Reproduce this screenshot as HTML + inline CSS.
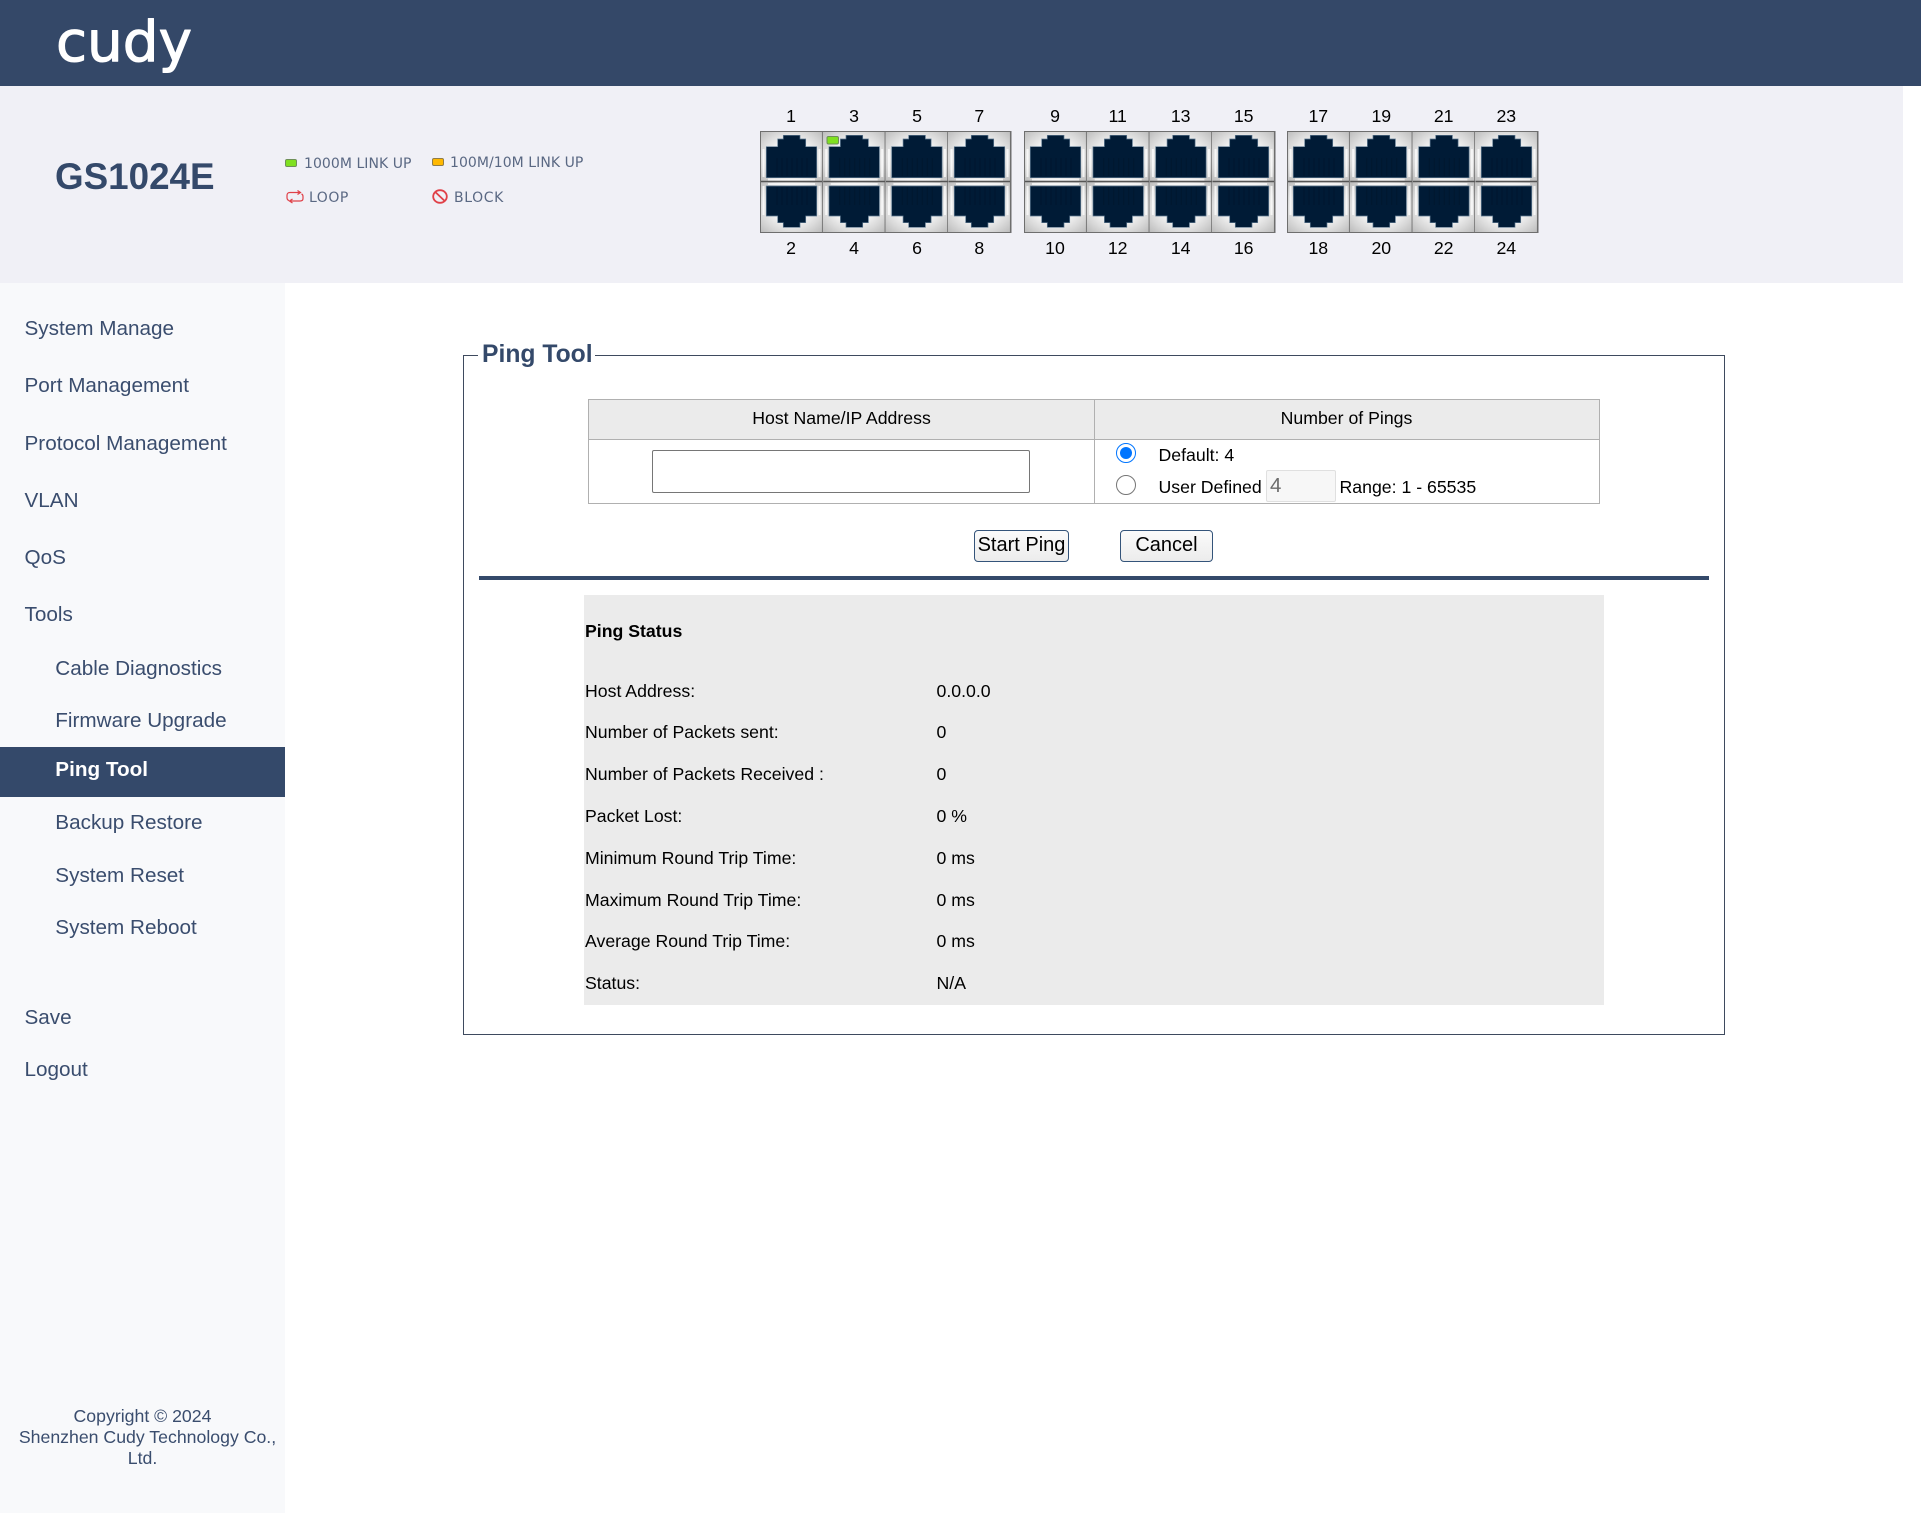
<!DOCTYPE html>
<html lang="en">
<head>
<meta charset="utf-8">
<title>Ping Tool</title>
<style>
html,body{margin:0;padding:0;background:#fff;}
body{position:relative;width:1921px;height:1516px;overflow:hidden;font-family:"Liberation Sans",Arial,sans-serif;color:#000;}
.a{position:absolute;}
.t{position:absolute;white-space:nowrap;line-height:20px;font-size:17.7px;}
.m{position:absolute;white-space:nowrap;line-height:24px;font-size:20.7px;color:#3a4d6e;}
.l{position:absolute;white-space:nowrap;line-height:16px;font-family:"DejaVu Sans",sans-serif;font-size:14px;letter-spacing:.05px;color:#5a6883;}
.n{position:absolute;width:40px;text-align:center;line-height:20px;font-size:17.7px;}
.b{position:absolute;top:530px;height:32px;box-sizing:border-box;border:1.8px solid #34547a;border-radius:4px;background:linear-gradient(#fbfbfb,#ececec);font-size:20px;line-height:28px;text-align:center;color:#000;}
input[type=radio]{position:absolute;margin:0;width:20px;height:20px;}
</style>
</head>
<body>
<!-- header -->
<div class="a" style="left:0;top:0;width:1921px;height:86px;background:#344868;"></div>
<svg class="a" style="left:0;top:0" width="260" height="86"><text x="56" y="61" textLength="136" lengthAdjust="spacingAndGlyphs" font-family="DejaVu Sans" font-size="56" fill="#fff" stroke="#fff" stroke-width="1.1" stroke-linejoin="round">cudy</text></svg>
<!-- sub header -->
<div class="a" style="left:0;top:86px;width:1903px;height:197px;background:#f0f0f6;"></div>
<div class="t" style="left:55px;top:155px;font-size:36.8px;font-weight:bold;line-height:44px;color:#34496a;">GS1024E</div>

<!-- legend -->
<div class="a" style="left:285px;top:159px;width:12px;height:8px;box-sizing:border-box;background:#7fe020;border:1px solid #6e8f58;border-radius:2px;"></div>
<div class="l" style="left:304px;top:156px;">1000M LINK UP</div>
<div class="a" style="left:432px;top:158px;width:12px;height:8px;box-sizing:border-box;background:#ffb800;border:1px solid #8f7c48;border-radius:2px;"></div>
<div class="l" style="left:450px;top:155px;">100M/10M LINK UP</div>
<svg class="a" style="left:286px;top:190px" width="18" height="14" viewBox="0 0 18 14" fill="none" stroke="#e04048" stroke-width="1.2">
<path d="M14 2.500H4Q1 2.500 1 5.500V7.500Q1 10 3 10.500"/><path d="M11.500 .5L14.500 2.500L11.500 4.500"/>
<path d="M4 11H14Q17 11 17 8.500V6.500Q17 4.500 15.500 4"/><path d="M6.500 9L3.500 11L6.500 13"/>
</svg>
<div class="l" style="left:309px;top:190px;letter-spacing:.5px;">LOOP</div>
<svg class="a" style="left:432px;top:189px" width="16" height="15" viewBox="0 0 16 15" fill="none" stroke="#e04048" stroke-width="1.8">
<ellipse cx="8" cy="7.500" rx="6.800" ry="6.300"/><path d="M3.300 3L12.700 12"/>
</svg>
<div class="l" style="left:454px;top:190px;letter-spacing:.6px;">BLOCK</div>

<!-- port numbers -->
<div class="n" style="left:771px;top:106px">1</div><div class="n" style="left:834px;top:106px">3</div><div class="n" style="left:897px;top:106px">5</div><div class="n" style="left:959.300px;top:106px">7</div>
<div class="n" style="left:1035px;top:106px">9</div><div class="n" style="left:1097.700px;top:106px">11</div><div class="n" style="left:1160.700px;top:106px">13</div><div class="n" style="left:1223.700px;top:106px">15</div>
<div class="n" style="left:1298.300px;top:106px">17</div><div class="n" style="left:1361.300px;top:106px">19</div><div class="n" style="left:1423.700px;top:106px">21</div><div class="n" style="left:1486.300px;top:106px">23</div>
<div class="n" style="left:771px;top:237.500px">2</div><div class="n" style="left:834px;top:237.500px">4</div><div class="n" style="left:897px;top:237.500px">6</div><div class="n" style="left:959.300px;top:237.500px">8</div>
<div class="n" style="left:1035px;top:237.500px">10</div><div class="n" style="left:1097.700px;top:237.500px">12</div><div class="n" style="left:1160.700px;top:237.500px">14</div><div class="n" style="left:1223.700px;top:237.500px">16</div>
<div class="n" style="left:1298.300px;top:237.500px">18</div><div class="n" style="left:1361.300px;top:237.500px">20</div><div class="n" style="left:1423.700px;top:237.500px">22</div><div class="n" style="left:1486.300px;top:237.500px">24</div>

<!-- ports -->
<svg class="a" style="left:760px;top:131px" width="790" height="102" viewBox="0 0 790 102">
<defs>
<radialGradient id="g" cx=".5" cy=".5" r=".72">
<stop offset="0" stop-color="#fff"/><stop offset=".45" stop-color="#f0f0f0"/><stop offset=".7" stop-color="#d8d8d8"/><stop offset="1" stop-color="#b8b8b8"/>
</radialGradient>
<g id="p">
<rect x="0" y="0" width="62.700" height="50.500" fill="url(#g)"/>
<rect x="0" y="50.500" width="62.700" height="51" fill="url(#g)"/>
<path d="M3.500 18V46M59.500 18V46M3.500 55V84M59.500 55V84M8 53H55M8 48.500H55" stroke="#fff" stroke-width="2" opacity=".75"/>
<path d="M6.300 46.700V15.700H17.700V8H23.300V4.300H40V8H45.700V15.700H56.700V46.700Z" fill="#001b36" stroke="#5d7890" stroke-width=".7"/>
<path d="M6.300 55H56.700V85H45.700V91.700H40V96.300H23.300V91.700H17.700V85H6.300Z" fill="#001b36" stroke="#5d7890" stroke-width=".7"/>
<path d="M17 27V45M22 27V45M27 27V45M32 27V45M37 27V45M42 27V45M47 27V45M17 56V74M22 56V74M27 56V74M32 56V74M37 56V74M42 56V74M47 56V74" stroke="#001830" stroke-width="1.200"/>
<path d="M.5 50.500H62.700" stroke="#555" stroke-width="1.500"/>
<path d="M62.700 0V102" stroke="#5e5e5e" stroke-width="1.500"/>
</g>
</defs>
<use href="#p" x="0"/><use href="#p" x="62.700"/><use href="#p" x="125.400"/><use href="#p" x="188"/>
<use href="#p" x="264"/><use href="#p" x="326.700"/><use href="#p" x="389.400"/><use href="#p" x="452"/>
<use href="#p" x="527"/><use href="#p" x="589.700"/><use href="#p" x="652.400"/><use href="#p" x="715"/>
<g fill="none" stroke="#6e6e6e" stroke-width="1">
<rect x=".5" y=".5" width="250" height="101"/><rect x="264.500" y=".5" width="250" height="101"/><rect x="527.500" y=".5" width="250" height="101"/>
</g>
<rect x="67" y="5.500" width="11.500" height="7.500" rx="1.500" fill="#7fe020" stroke="#6e8f58" stroke-width="1"/>
</svg>

<!-- sidebar -->
<div class="a" style="left:0;top:283px;width:285px;height:1230px;background:#f8f9fb;"></div>
<div class="m" style="left:24.500px;top:317px">System Manage</div>
<div class="m" style="left:24.500px;top:374px">Port Management</div>
<div class="m" style="left:24.500px;top:431.500px">Protocol Management</div>
<div class="m" style="left:24.500px;top:488.500px">VLAN</div>
<div class="m" style="left:24.500px;top:545.500px">QoS</div>
<div class="m" style="left:24.500px;top:602.500px">Tools</div>
<div class="m" style="left:55.300px;top:657px">Cable Diagnostics</div>
<div class="m" style="left:55.300px;top:709px">Firmware Upgrade</div>
<div class="a" style="left:0;top:747px;width:285px;height:50px;background:#34496a;"></div>
<div class="m" style="left:55.300px;top:758px;color:#fff;font-weight:bold;">Ping Tool</div>
<div class="m" style="left:55.300px;top:811px">Backup Restore</div>
<div class="m" style="left:55.300px;top:864px">System Reset</div>
<div class="m" style="left:55.300px;top:916px">System Reboot</div>
<div class="m" style="left:24.500px;top:1005.500px">Save</div>
<div class="m" style="left:24.500px;top:1058px">Logout</div>
<div class="a" style="left:0;top:1405.500px;width:285px;text-align:center;font-size:17.7px;line-height:21px;color:#3a4d6e;">Copyright © 2024<br><span style="position:relative;left:5px;">Shenzhen Cudy Technology Co.,</span><br>Ltd.</div>

<!-- fieldset -->
<div class="a" style="left:463px;top:355px;width:1262px;height:680px;box-sizing:border-box;border:1.500px solid #3e4a5e;"></div>
<div class="a" style="left:478px;top:350px;width:117px;height:10px;background:#fff;"></div>
<div class="t" style="left:482px;top:340.500px;font-size:24.700px;line-height:28px;font-weight:bold;color:#34496a;">Ping Tool</div>

<!-- table -->
<div class="a" style="left:588px;top:399px;width:1012px;height:105px;box-sizing:border-box;border:1.250px solid #b0b0b0;"></div>
<div class="a" style="left:589px;top:400px;width:1010px;height:39px;background:#ebebeb;border-bottom:1.250px solid #b0b0b0;"></div>
<div class="a" style="left:1094px;top:399px;width:1.250px;height:105px;background:#b0b0b0;"></div>
<div class="t" style="left:589px;top:408px;width:505px;text-align:center;">Host Name/IP Address</div>
<div class="t" style="left:1094px;top:408px;width:505px;text-align:center;">Number of Pings</div>
<div class="a" style="left:652px;top:450px;width:378px;height:43px;box-sizing:border-box;border:1.250px solid #767676;border-radius:2px;background:#fff;"></div>
<input type="radio" name="r" checked style="left:1116px;top:443px">
<input type="radio" name="r" style="left:1116px;top:475px">
<div class="t" style="left:1158.500px;top:444.500px">Default: 4</div>
<div class="t" style="left:1158.500px;top:476.500px">User Defined</div>
<div class="a" style="left:1266px;top:470px;width:70px;height:32px;box-sizing:border-box;border:1.250px solid #e0e0e0;border-radius:2px;background:#f7f7f7;color:#6d6d6d;font-size:20.500px;line-height:29px;padding-left:3px;">4</div>
<div class="t" style="left:1339.500px;top:476.500px">Range: 1 - 65535</div>

<!-- buttons -->
<div class="b" style="left:974px;width:95px;">Start Ping</div>
<div class="b" style="left:1120px;width:93px;">Cancel</div>

<div class="a" style="left:479px;top:576px;width:1230px;height:4px;background:#34496a;"></div>

<!-- status -->
<div class="a" style="left:584px;top:595px;width:1020px;height:410px;background:#ebebeb;"></div>
<div class="t" style="left:585px;top:621px;font-weight:bold;">Ping Status</div>
<div class="t" style="left:585px;top:681px">Host Address:</div><div class="t" style="left:936.500px;top:681px">0.0.0.0</div>
<div class="t" style="left:585px;top:722px">Number of Packets sent:</div><div class="t" style="left:936.500px;top:722px">0</div>
<div class="t" style="left:585px;top:764px">Number of Packets Received :</div><div class="t" style="left:936.500px;top:764px">0</div>
<div class="t" style="left:585px;top:806px">Packet Lost:</div><div class="t" style="left:936.500px;top:806px">0 %</div>
<div class="t" style="left:585px;top:848px">Minimum Round Trip Time:</div><div class="t" style="left:936.500px;top:848px">0 ms</div>
<div class="t" style="left:585px;top:890px">Maximum Round Trip Time:</div><div class="t" style="left:936.500px;top:890px">0 ms</div>
<div class="t" style="left:585px;top:931px">Average Round Trip Time:</div><div class="t" style="left:936.500px;top:931px">0 ms</div>
<div class="t" style="left:585px;top:973px">Status:</div><div class="t" style="left:936.500px;top:973px">N/A</div>
</body>
</html>
